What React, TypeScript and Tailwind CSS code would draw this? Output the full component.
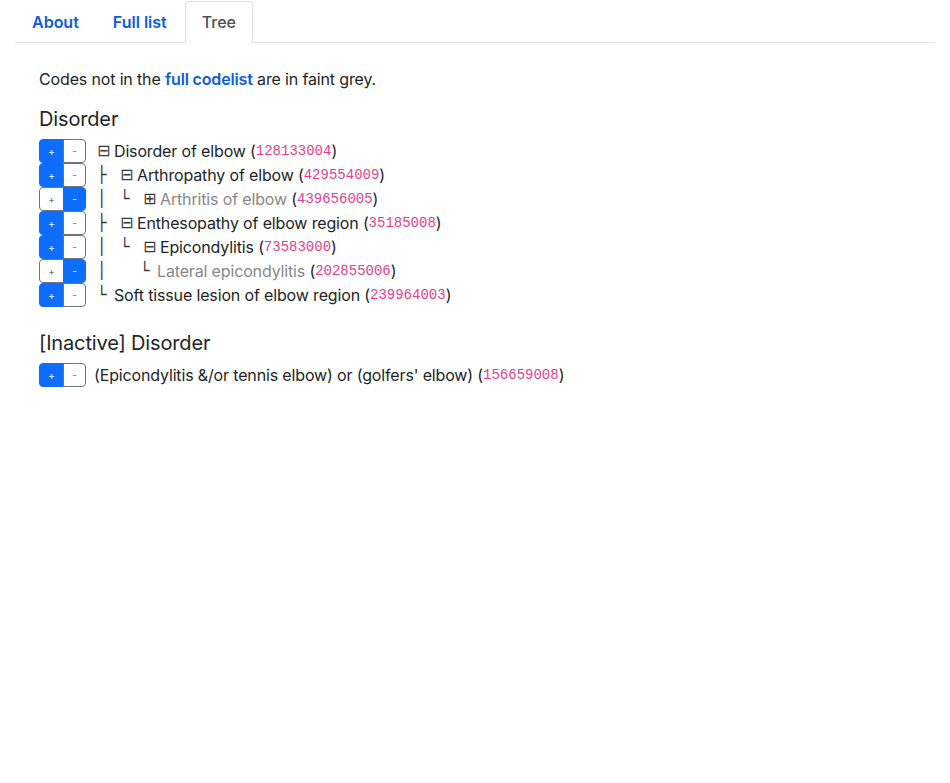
import React from "react"

type Row = {
  prefix: string[]   // indent columns
  glyph: string      // ⊟ ⊞ └ or ""
  term: string
  code: string
  faint?: boolean
  included: boolean  // true: + is active, false: - is active
}

const disorder: Row[] = [
  { prefix: [],         glyph: "⊟", term: "Disorder of elbow",                code: "128133004", included: true },
  { prefix: ["├"],      glyph: "⊟", term: "Arthropathy of elbow",             code: "429554009", included: true },
  { prefix: ["│", "└"], glyph: "⊞", term: "Arthritis of elbow",               code: "439656005", faint: true, included: false },
  { prefix: ["├"],      glyph: "⊟", term: "Enthesopathy of elbow region",     code: "35185008",  included: true },
  { prefix: ["│", "└"], glyph: "⊟", term: "Epicondylitis",                    code: "73583000",  included: true },
  { prefix: ["│", ""],  glyph: "└", term: "Lateral epicondylitis",            code: "202855006", faint: true, included: false },
  { prefix: [],         glyph: "└", term: "Soft tissue lesion of elbow region", code: "239964003", included: true },
]

const inactive: Row[] = [
  { prefix: [], glyph: "", term: "(Epicondylitis &/or tennis elbow) or (golfers' elbow)", code: "156659008", included: true },
]

const glyphFont = { fontFamily: "'DejaVu Sans', sans-serif" }

function Toggle({ included }: { included: boolean }) {
  const on  = "bg-[#0d6efd] border-[#0d6efd] text-white"
  const off = "bg-white border-[#6c757d] text-[#6c757d]"
  return (
    <div className="flex h-6 shrink-0">
      <button className={`w-[25px] h-6 border rounded-l text-[10px] leading-none ${included ? on : off}`}>+</button>
      <button className={`w-[23px] h-6 border -ml-px rounded-r text-[10px] leading-none ${included ? off : on}`}>-</button>
    </div>
  )
}

function TreeRow({ row }: { row: Row }) {
  const bare = row.prefix.length === 0 && !row.glyph
  return (
    <div className="flex items-center h-6">
      <Toggle included={row.included} />
      <div className={`flex items-center whitespace-nowrap ${bare ? "ml-2" : "ml-[11px]"}`}>
        {row.prefix.map((p, i) => (
          <span key={i} className={`inline-block text-[#343a40] ${p ? "w-[23px]" : "w-[20px]"}`} style={glyphFont}>{p}</span>
        ))}
        {row.glyph && (
          <span className="inline-block w-[17px] text-[#343a40]" style={glyphFont}>{row.glyph}</span>
        )}
        <span className={row.faint ? "text-[#888888]" : "text-[#212529]"}>{row.term}</span>
        <span className="text-[#212529]">&nbsp;(</span>
        <code className="text-[14px] tracking-normal text-[#e83e8c]" style={{ fontFamily: "'Liberation Mono', monospace" }}>{row.code}</code>
        <span className="text-[#212529]">)</span>
      </div>
    </div>
  )
}

export default function App() {
  return (
    <div className="px-[15px] text-[16px] leading-6 text-[#212529]" style={{ fontFamily: "Inter, 'Liberation Sans', sans-serif" }}>
      {/* Tabs */}
      <div className="flex border-b border-[#dee2e6] pt-px">
        <a className="px-4 h-[41px] flex items-center font-semibold text-[#0b5ed7] ml-px">About</a>
        <a className="px-4 h-[41px] flex items-center font-semibold text-[#0b5ed7] ml-[2px]">Full list</a>
        <a className="px-4 h-[42px] -mb-px ml-[2px] flex items-center font-medium text-[#495057] bg-white border border-[#dee2e6] border-b-white rounded-t">Tree</a>
      </div>

      <div className="px-6 pt-6 tracking-[-0.15px]">
        <p className="mb-4">
          Codes not in the <a className="font-semibold text-[#0b5ed7]">full codelist</a> are in faint grey.
        </p>

        <h5 className="text-[20px] leading-6 font-normal mb-2">Disorder</h5>
        <div className="flex flex-col">
          {disorder.map((r, i) => <TreeRow key={i} row={r} />)}
        </div>

        <h5 className="text-[20px] leading-6 font-normal mt-6 mb-2">[Inactive] Disorder</h5>
        <div className="flex flex-col">
          {inactive.map((r, i) => <TreeRow key={i} row={r} />)}
        </div>
      </div>
    </div>
  )
}
